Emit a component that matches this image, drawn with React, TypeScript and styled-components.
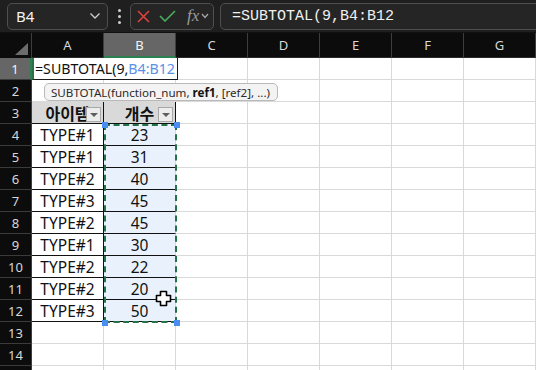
import React from 'react'
import styled, { createGlobalStyle } from 'styled-components'

const GlobalStyle = createGlobalStyle`
  html, body { margin: 0; padding: 0; background: #ffffff; }
  body { font-family: "Noto Sans", "Noto Sans CJK KR", sans-serif; }
  * { box-sizing: border-box; }
`

const columns = ['A', 'B', 'C', 'D', 'E', 'F', 'G']

const rows: { a: string; b: string }[] = [
  { a: 'TYPE#1', b: '23' },
  { a: 'TYPE#1', b: '31' },
  { a: 'TYPE#2', b: '40' },
  { a: 'TYPE#3', b: '45' },
  { a: 'TYPE#2', b: '45' },
  { a: 'TYPE#1', b: '30' },
  { a: 'TYPE#2', b: '22' },
  { a: 'TYPE#2', b: '20' },
  { a: 'TYPE#3', b: '50' },
]

const Screen = styled.div`
  width: 536px; height: 370px; overflow: hidden;
  display: flex; flex-direction: column;
  background: #fff;
`

// ---- toolbar ----
const Toolbar = styled.div`
  display: flex; align-items: center;
  height: 33px; flex: none;
  padding-left: 7px;
  background: #1f1f1f;
  border-bottom: 1px solid #111;
`

const Box = styled.div`
  height: 27px;
  display: flex; align-items: center;
  background: #252525;
  border: 1px solid #4f4f4f;
  border-radius: 5px;
`

const NameBox = styled(Box)`
  width: 101px;
  justify-content: space-between;
  padding: 0 6px 0 8px;
  color: #f2f2f2; font-size: 15px;
  font-family: "Noto Sans", sans-serif;
`

const Kebab = styled.div`
  width: 22px; display: flex; flex-direction: column; align-items: center; gap: 3px;
  span { width: 3px; height: 3px; border-radius: 50%; background: #d0d0d0; }
`

const FnBox = styled(Box)`
  width: 84px; margin-right: 6px;
  padding: 0 0 0 6px; gap: 9px;
`

const Fx = styled.span`
  font-family: "Liberation Serif", "DejaVu Serif", serif;
  font-style: italic; font-size: 17px; color: #9b9b9b;
  margin-left: 2px;
`

const FormulaBox = styled(Box)`
  flex: 1; margin-right: -8px;
  padding-left: 11px;
  color: #f0f0f0;
  font-family: "Liberation Mono", "DejaVu Sans Mono", monospace;
  font-size: 15px;
`

// ---- sheet ----
const Sheet = styled.div`
  position: relative;
  display: grid;
  grid-template-columns: 32px repeat(7, 72px);
  grid-template-rows: 25px repeat(15, 22px);
`

const Corner = styled.div`
  background: #0c0c0c;
  border-right: 1px solid #3e3e3e;
  position: relative;
  &::after {
    content: ''; position: absolute; right: 3px; bottom: 3px;
    border-style: solid; border-width: 0 0 12px 13px;
    border-color: transparent transparent #6c6c6c transparent;
  }
`

const ColHead = styled.div<{ $on?: boolean }>`
  display: flex; align-items: center; justify-content: center;
  background: ${p => (p.$on ? '#666666' : '#0c0c0c')};
  color: ${p => (p.$on ? '#f4f4f4' : '#d8d8d8')};
  font-size: 13px;
  border-right: 1px solid #3e3e3e;
  border-bottom: ${p => (p.$on ? '2px solid #2c8150' : '1px solid #2a2a2a')};
`

const RowHead = styled.div<{ $on?: boolean }>`
  display: flex; align-items: center; justify-content: center;
  background: ${p => (p.$on ? '#666666' : '#0c0c0c')};
  color: ${p => (p.$on ? '#f4f4f4' : '#d8d8d8')};
  font-size: 13px;
  border-bottom: 1px solid #3b3b3b;
  border-right: ${p => (p.$on ? '2px solid #2c8150' : '1px solid #3e3e3e')};
`

const Cell = styled.div`
  display: flex; align-items: center; justify-content: center;
  font-size: 15px; color: #111;
  border-right: 1px solid #d9d9d9;
  border-bottom: 1px solid #d9d9d9;
`

const TableCell = styled(Cell)<{ $head?: boolean; $pick?: boolean }>`
  position: relative;
  background: ${p => (p.$head ? '#d9d9d9' : p.$pick ? '#e9f1fc' : '#fff')};
  border-bottom-color: #111;
  border-right-color: ${p => (p.$pick ? '#d9d9d9' : '#111')};
  font-weight: ${p => (p.$head ? 700 : 400)};
  font-size: ${p => (p.$head ? '16px' : '15.5px')};
  padding-top: 1px;
`

const FilterBtn = styled.span`
  position: absolute; right: 2px; top: 5px;
  width: 15px; height: 15px;
  background: #ececec; border: 1px solid #a8a8a8;
  display: flex; align-items: center; justify-content: center;
  &::after {
    content: ''; border-style: solid; border-width: 4px 4px 0 4px;
    border-color: #5e5e5e transparent transparent transparent;
  }
`

// ---- overlays ----
const Editor = styled.div`
  position: absolute; left: 32px; top: 25px; width: 146px; height: 22px;
  background: #fff;
  border: 1px solid #1a1a1a; border-left: 2px solid #2c6e45; border-top: none;
  padding-left: 1px;
  display: flex; align-items: center;
  font-size: 14.2px; color: #111; white-space: pre; overflow: hidden;
`

const RefText = styled.span`
  color: #5b8fe6;
`

const Tip = styled.div`
  position: absolute; left: 44px; top: 50px; width: 234px; height: 18px;
  background: #f3f3f3; border: 1px solid #b9b9b9; border-radius: 5px;
  display: flex; align-items: center; padding-left: 6px;
  font-size: 11.6px; color: #2b2b2b; white-space: pre;
  b { font-weight: 700; color: #111; }
`

const Marquee = styled.div`
  position: absolute; left: 104px; top: 91px; width: 73px; height: 199px;
  border: 2px dashed #227448;
  pointer-events: none;
`

const Handle = styled.span<{ $x: number; $y: number }>`
  position: absolute; width: 6px; height: 6px;
  left: ${p => p.$x}px; top: ${p => p.$y}px;
  background: #4a8ef2;
`

const Pointer = styled.svg`
  position: absolute; left: 155px; top: 257px;
`

const App: React.FC = () => {
  const renderRow = (r: number) => {
    const cells: React.ReactNode[] = []
    // row 15 only peeks in at the bottom edge, its number is out of view
    cells.push(<RowHead key='h' $on={r === 1}>{r < 15 ? r : ''}</RowHead>)
    columns.forEach((c, i) => {
      const key = c + r
      if (r === 3 && i < 2) {
        cells.push(
          <TableCell key={key} $head>
            {i === 0 ? '아이템' : '개수'}
            <FilterBtn />
          </TableCell>
        )
      } else if (r >= 4 && r <= 12 && i < 2) {
        const item = rows[r - 4]
        cells.push(<TableCell key={key} $pick={i === 1}>{i === 0 ? item.a : item.b}</TableCell>)
      } else {
        cells.push(<Cell key={key} />)
      }
    })
    return cells
  }

  return (
    <Screen>
      <GlobalStyle />
      <Toolbar>
        <NameBox>
          B4
          <svg width='12' height='8' viewBox='0 0 12 8'>
            <path d='M1.5 1.5 L6 6 L10.5 1.5' stroke='#cfcfcf' strokeWidth='1.3' fill='none' />
          </svg>
        </NameBox>
        <Kebab><span /><span /><span /></Kebab>
        <FnBox>
          <svg width='13' height='13' viewBox='0 0 13 13'>
            <path d='M1 1 L12 12 M12 1 L1 12' stroke='#e0453d' strokeWidth='1.5' />
          </svg>
          <svg width='17' height='12' viewBox='0 0 17 12'>
            <path d='M1 6 L6 11 L16 1' stroke='#4bb35f' strokeWidth='1.5' fill='none' />
          </svg>
          <Fx>fx</Fx>
          <svg width='8' height='6' viewBox='0 0 8 6' style={{ marginLeft: -7 }}>
            <path d='M1 1 L4 4.5 L7 1' stroke='#a8a8a8' strokeWidth='1.2' fill='none' />
          </svg>
        </FnBox>
        <FormulaBox>=SUBTOTAL(9,B4:B12</FormulaBox>
      </Toolbar>

      <Sheet>
        <Corner />
        {columns.map(c => (
          <ColHead key={c} $on={c === 'B'}>{c}</ColHead>
        ))}
        {Array.from({ length: 15 }, (_, i) => renderRow(i + 1))}

        <Editor>
          {'=SUBTOTAL(9,'}<RefText>B4:B12</RefText>
        </Editor>
        <Tip>
          {'SUBTOTAL(function_num, '}<b>ref1</b>{', [ref2], ...)'}
        </Tip>
        <Marquee />
        <Handle $x={102} $y={89} />
        <Handle $x={174} $y={89} />
        <Handle $x={102} $y={287} />
        <Handle $x={174} $y={287} />
        <Pointer width='17' height='17' viewBox='0 0 17 17'>
          <path
            d='M5.5 1.5 H11.5 V5.5 H15.5 V11.5 H11.5 V15.5 H5.5 V11.5 H1.5 V5.5 H5.5 Z'
            fill='#fff' stroke='#000' strokeWidth='1.6' strokeLinejoin='round'
          />
        </Pointer>
      </Sheet>
    </Screen>
  )
}

export default App
